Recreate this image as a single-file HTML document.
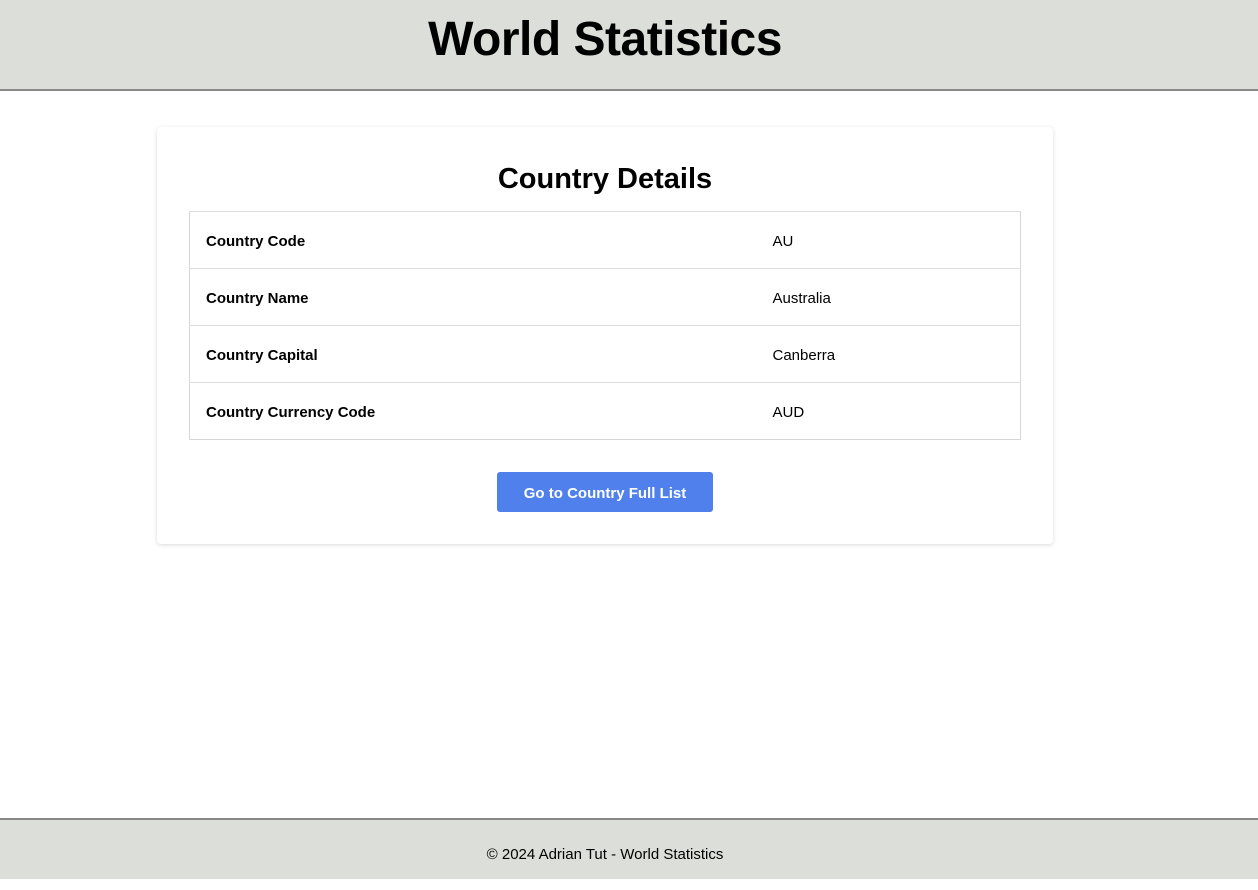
<!DOCTYPE html>
<html><head><style>
*{box-sizing:border-box;margin:0;padding:0}
body{width:1258px;height:879px;font-family:"Liberation Sans",sans-serif;background:#fff;position:relative;overflow:hidden}
header{position:absolute;left:0;top:0;width:1258px;height:91px;background:#dcdfd9;border-bottom:2px solid #888}
header h1{position:absolute;left:0;width:1210px;top:12px;text-align:center;font-size:48px;line-height:56px;font-weight:bold;letter-spacing:-0.5px}
.card{position:absolute;left:157px;top:127px;width:896px;height:417px;background:#fff;border-radius:4px;box-shadow:0 1px 4px rgba(0,0,0,.15)}
.card h2{position:absolute;left:0;width:896px;top:34px;text-align:center;font-size:29px;line-height:36px;font-weight:bold}
table{position:absolute;left:32px;top:84px;width:832px;border-collapse:collapse;font-size:15px}
td{height:57px;border-top:1px solid #ddd;padding-left:16px;padding-top:2px}
table{border:1px solid #d6d6d6}
td.k{font-weight:bold;width:567px}
.btn{position:absolute;left:340px;top:345px;width:216px;height:40px;background:#4f80ec;border-radius:3px;color:#fff;font-weight:bold;font-size:15px;line-height:43px;text-align:center}
footer{position:absolute;left:0;top:818px;width:1258px;height:61px;background:#dcdfd9;border-top:2px solid #888;text-align:center;font-size:15px;line-height:70px;padding-right:48px}
</style></head><body>
<header><h1>World Statistics</h1></header>
<div class="card">
<h2>Country Details</h2>
<table>
<tr><td class="k">Country Code</td><td>AU</td></tr>
<tr><td class="k">Country Name</td><td>Australia</td></tr>
<tr><td class="k">Country Capital</td><td>Canberra</td></tr>
<tr><td class="k">Country Currency Code</td><td>AUD</td></tr>
</table>
<div class="btn">Go to Country Full List</div>
</div>
<footer>© 2024 Adrian Tut - World Statistics</footer>
</body></html>
